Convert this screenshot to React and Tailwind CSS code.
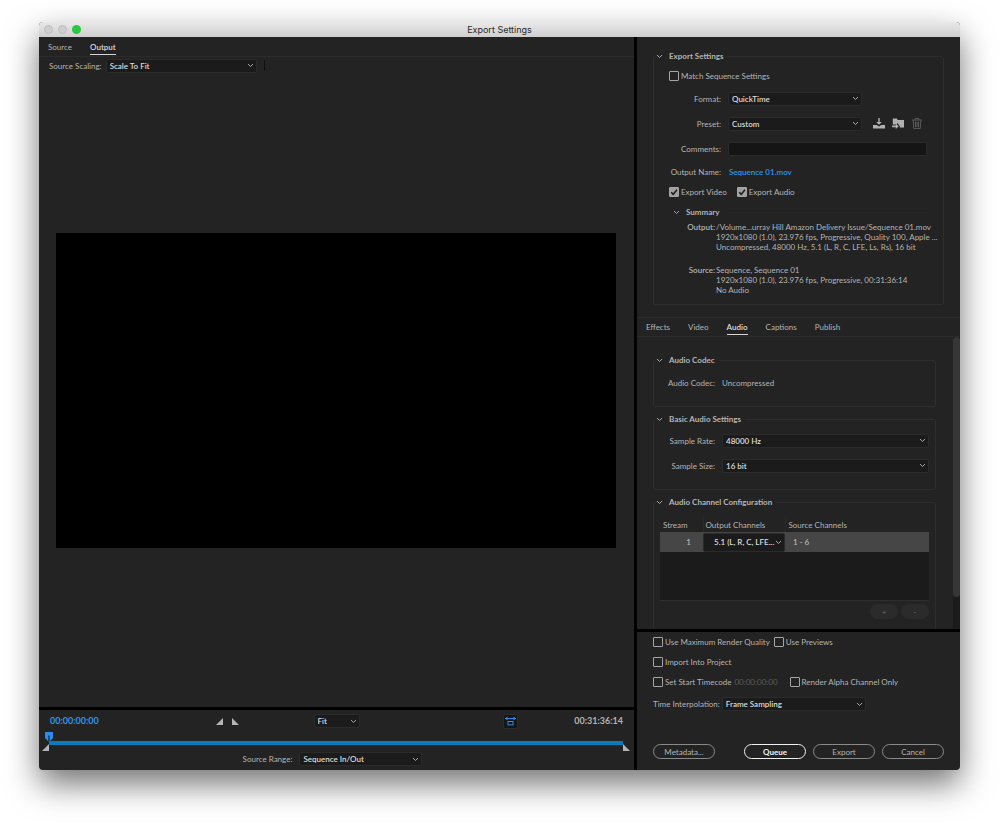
import { useState } from "react";
import clsx from "clsx";

const Chevron = ({ className }) => (
  <svg viewBox="0 0 8 6" className={clsx("pointer-events-none h-[5px] w-[7px]", className)} fill="none" stroke="currentColor" strokeWidth="1.1">
    <path d="M1 1.2 4 4.2 7 1.2" />
  </svg>
);

const Select = ({ id, label, options, className, selectClassName }) => (
  <span className={clsx("relative inline-flex h-[14px]", className)}>
    <select
      id={id}
      aria-label={label}
      className={clsx(
        "h-full w-full appearance-none rounded-[2px] border border-[#2b2b2b] bg-[#1b1b1b] font-semibold text-[#dcdcdc] outline-none",
        selectClassName || "truncate pr-3 pl-[3px]"
      )}
    >
      {options.map((option) => (
        <option key={option}>{option}</option>
      ))}
    </select>
    <Chevron className="absolute inset-y-0 right-[3px] my-auto text-[#b4b4b4]" />
  </span>
);

const Checkbox = ({ label, defaultChecked }) => (
  <label className="flex items-center gap-[2px]">
    <span className="relative flex">
      <input
        type="checkbox"
        defaultChecked={defaultChecked}
        className="peer h-[10px] w-[10px] appearance-none rounded-[1px] border border-[#a6a6a6] checked:bg-[#a0a0a0]"
      />
      <svg viewBox="0 0 10 10" className="pointer-events-none absolute inset-0 hidden h-[10px] w-[10px] peer-checked:block" fill="none" stroke="#1c1c1c" strokeWidth="1.5">
        <path d="M2.2 5.2 4.2 7.3 8 2.8" />
      </svg>
    </span>
    {label}
  </label>
);

const Group = ({ title, className, children }) => (
  <fieldset className={clsx("min-w-0 rounded-[2px] border border-[#2e2e2e]", className)}>
    <legend className="ml-px flex h-[14px] items-center pr-1 pl-px font-bold">
      <Chevron className="mr-[6px]" />
      {title}
    </legend>
    {children}
  </fieldset>
);

const Tab = ({ active, children, onClick }) => (
  <button
    type="button"
    role="tab"
    aria-selected={active}
    onClick={onClick}
    className={clsx("border-b pb-px leading-[12px]", active ? "border-[#d6d6d6] font-semibold text-[#dcdcdc]" : "border-transparent")}
  >
    {children}
  </button>
);

const FormRow = ({ label, htmlFor, wide, children }) => (
  <div className="flex h-[25px] items-center gap-[7px]">
    <label htmlFor={htmlFor} className={clsx("shrink-0 text-right", wide ? "w-[67px]" : "w-[61px]")}>
      {label}
    </label>
    {children}
  </div>
);

const PillButton = ({ primary, children }) => (
  <button
    type="button"
    className={clsx(
      "flex h-[15px] w-[62px] items-center justify-center rounded-full border",
      primary ? "border-[#f0f0f0] font-bold text-[#f0f0f0]" : "border-[#8a8a8a]"
    )}
  >
    {children}
  </button>
);

const TitleBar = () => (
  <header className="relative flex h-[15px] items-center justify-center bg-linear-to-b from-[#e9e9e9] to-[#cfcfcf] font-[Inter,sans-serif] text-[9px] text-[#2a2a2a]">
    <div className="absolute left-[5px] flex gap-[5px]">
      <span className="h-[9px] w-[9px] rounded-full border border-[#bdbdbd] bg-[#cfcfcf]" />
      <span className="h-[9px] w-[9px] rounded-full border border-[#bdbdbd] bg-[#cfcfcf]" />
      <span className="h-[9px] w-[9px] rounded-full bg-[#28c840]" />
    </div>
    <h1>Export Settings</h1>
  </header>
);

const Triangle = ({ flip }) => (
  <svg viewBox="0 0 7 7" className={clsx("h-[7px] w-[7px]", flip && "-scale-x-100")} fill="#b4b4b4">
    <path d="M7 0V7H0Z" />
  </svg>
);

const PreviewPane = () => {
  const [tab, setTab] = useState("Output");

  return (
    <main className="flex min-w-0 flex-1 flex-col">
      <div role="tablist" className="flex h-[20px] items-end gap-[18px] border-b border-[#2b2b2b] px-[9px] pb-px">
        {["Source", "Output"].map((name) => (
          <Tab key={name} active={tab === name} onClick={() => setTab(name)}>
            {name}
          </Tab>
        ))}
      </div>
      <div className="flex h-[17px] items-center pl-[10px]">
        <label htmlFor="scaling" className="mr-[4px]">Source Scaling:</label>
        <Select id="scaling" options={["Scale To Fit", "Scale To Fill", "Stretch To Fill"]} className="w-[151px]" />
        <span className="ml-[7px] h-[11px] w-px bg-[#101010]" />
      </div>
      <div className="flex flex-1 items-center pr-[18px] pl-[17px]">
        <div className="aspect-video w-full bg-black" />
      </div>

      {/* Transport */}
      <div className="border-t-[3px] border-black">
        <div className="grid h-[22px] grid-cols-[1fr_auto_1fr] items-center px-[11px] text-[9px] font-bold">
          <div className="flex items-center justify-between pr-[75px]">
            <span className="text-[#2d95ee]">00:00:00:00</span>
            <span className="flex gap-[9px]">
              <button type="button" aria-label="Set in point"><Triangle /></button>
              <button type="button" aria-label="Set out point"><Triangle flip /></button>
            </span>
          </div>
          <Select label="Zoom level" options={["Fit", "50%", "100%"]} className="w-[46px] text-[8px]" />
          <div className="flex items-center justify-between pl-[143px]">
            <button type="button" aria-label="Aspect ratio correction" className="flex h-[15px] w-[15px] items-center justify-center rounded-[2px] border border-[#2b2b2b] bg-[#161616]">
              <svg viewBox="0 0 11 10" className="h-[10px] w-[11px]" fill="none" stroke="#2d8ceb">
                <path d="M0 2.5H11" />
                <path d="M0 2.5 2.5 .6V4.4ZM11 2.5 8.5 .6V4.4Z" fill="#2d8ceb" stroke="none" />
                <rect x="3" y="5.5" width="5" height="3.4" />
              </svg>
            </button>
            <span>00:31:36:14</span>
          </div>
        </div>
        <div className="grid h-[20px] grid-cols-[10px_1fr_11px]">
          <div className="flex flex-col items-end">
            <svg viewBox="0 0 8 10" className="-mr-1 h-[10px] w-2 shrink-0">
              <path d="M0 0H8V6L4.6 9.6H3.4L0 6Z" fill="#2d8ceb" />
              <path d="M4 3.5V10" stroke="#0d2b48" strokeWidth="1.3" />
            </svg>
            <span className="mt-[2px]"><Triangle /></span>
          </div>
          <div className="mt-[9px] h-[4px] bg-[#0a7cbc]" />
          <div className="pt-3"><Triangle flip /></div>
        </div>
        <div className="flex h-[18px] items-start justify-center gap-[7px] pr-2">
          <label htmlFor="range" className="leading-[14px]">Source Range:</label>
          <Select id="range" options={["Sequence In/Out", "Entire Sequence", "Work Area", "Custom"]} className="w-[123px]" />
        </div>
      </div>
    </main>
  );
};

const Summary = () => (
  <section>
    <h3 className="flex h-[20px] items-center pl-[19px] font-bold">
      <Chevron className="mr-[6px]" />
      Summary
      <span className="mr-4 ml-[7px] h-px flex-1 bg-[#272727]" />
    </h3>
    <dl className="grid grid-cols-[61px_1fr] gap-x-px gap-y-[13px] leading-[10px] whitespace-nowrap">
      <dt className="text-right font-semibold">Output:</dt>
      <dd>
        /Volume...urray Hill Amazon Delivery Issue/Sequence 01.mov
        <br />
        1920x1080 (1.0), 23.976 fps, Progressive, Quality 100, Apple ...
        <br />
        Uncompressed, 48000 Hz, 5.1 (L, R, C, LFE, Ls, Rs), 16 bit
      </dd>
      <dt className="text-right font-semibold">Source:</dt>
      <dd>
        Sequence, Sequence 01
        <br />
        1920x1080 (1.0), 23.976 fps, Progressive, 00:31:36:14
        <br />
        No Audio
      </dd>
    </dl>
  </section>
);

const ExportPanel = () => (
  <section className="px-4 pt-3 pb-3">
    <Group title="Export Settings" className="pt-[2px] pb-[9px]">
      <div className="flex h-[21px] items-center pl-[15px]">
        <Checkbox label="Match Sequence Settings" />
      </div>
      <FormRow wide label="Format:" htmlFor="format">
        <Select id="format" options={["QuickTime", "H.264", "AVI"]} className="w-[134px]" />
      </FormRow>
      <FormRow wide label="Preset:" htmlFor="preset">
        <Select id="preset" options={["Custom"]} className="w-[134px]" />
        <span className="ml-[4px] flex items-center gap-[7px] text-[#b0b0b0]">
          <button type="button" aria-label="Save preset">
            <svg viewBox="0 0 12 11" className="h-[11px] w-3" fill="currentColor">
              <path d="M5.3 0H6.7V4H8.8L6 6.8 3.2 4H5.3Z" />
              <path d="M0 7H3.6L6 8.6 8.4 7H12V10.4H0Z" />
            </svg>
          </button>
          <button type="button" aria-label="Import preset">
            <svg viewBox="0 0 12 11" className="h-[11px] w-3" fill="currentColor">
              <path d="M.8.4H4.8L5.8 2H12V9.6H7.6L8 8.3 5 4.8V6.4H.8Z" />
              <path d="M0 7.5H3.8V5.8L6.8 8.3 3.8 10.9V9.2H0Z" />
            </svg>
          </button>
          <button type="button" aria-label="Delete preset" className="text-[#5a5a5a]">
            <svg viewBox="0 0 12 11" className="h-[11px] w-3" fill="none" stroke="currentColor">
              <path d="M1 2H11M4 1.8V.6H8V1.8M2.2 2.2 2.7 10.4H9.3L9.8 2.2M4.5 3.6V9M6 3.6V9M7.5 3.6V9" />
            </svg>
          </button>
        </span>
      </FormRow>
      <FormRow wide label="Comments:" htmlFor="comments">
        <input id="comments" type="text" className="mr-4 h-[14px] min-w-0 flex-1 rounded-[2px] border border-[#2b2b2b] bg-[#151515] px-1 outline-none" />
      </FormRow>
      <div className="flex h-[21px] items-center gap-[8px]">
        <span className="w-[67px] text-right">Output Name:</span>
        <a href="#output" className="font-semibold text-[#2d95ee]">Sequence 01.mov</a>
      </div>
      <div className="flex h-[20px] items-center gap-[10px] pl-[15px]">
        <Checkbox label="Export Video" defaultChecked />
        <Checkbox label="Export Audio" defaultChecked />
      </div>
      <Summary />
    </Group>
  </section>
);

const AudioPanel = () => (
  <div className="flex min-h-0 flex-1 overflow-hidden">
    <div className="flex h-0 min-w-0 flex-1 flex-col gap-[5px] pt-4 pr-[17px] pl-4">
      <Group title="Audio Codec" className="pt-[3px] pb-[11px]">
        <div className="flex h-[25px] items-center gap-[7px]">
          <span className="w-[61px] text-right">Audio Codec:</span>
          <span>Uncompressed</span>
        </div>
      </Group>
      <Group title="Basic Audio Settings" className="pt-[2px] pb-[11px]">
        <FormRow label="Sample Rate:" htmlFor="rate">
          <Select id="rate" options={["48000 Hz", "44100 Hz", "32000 Hz"]} className="mr-[6px] flex-1" />
        </FormRow>
        <FormRow label="Sample Size:" htmlFor="size">
          <Select id="size" options={["16 bit", "24 bit", "32 bit"]} className="mr-[6px] flex-1" />
        </FormRow>
      </Group>
      <Group title="Audio Channel Configuration" className="pt-2 pb-5">
        <div className="mx-[6px] h-[84px] border-b border-[#2e2e2e] bg-linear-to-b from-transparent from-[15px] to-[#1b1b1b] to-[15px]">
          <table className="w-full table-fixed border-collapse text-left">
            <thead>
              <tr className="h-[15px]">
                <th className="w-[43px] border-r border-[#292929] pl-[3px] font-normal">Stream</th>
                <th className="w-[82px] border-r border-[#292929] pl-[2px] font-normal">Output Channels</th>
                <th className="pl-[3px] font-normal">Source Channels</th>
              </tr>
            </thead>
            <tbody>
              <tr className="h-[20px] bg-[#464646] font-semibold">
                <td className="pr-[12px] text-right">1</td>
                <td className="p-0">
                  <Select label="Output channels" options={["5.1 (L, R, C, LFE...", "Stereo", "Mono"]} className="h-[19px] w-full align-top" selectClassName="pl-[10px]" />
                </td>
                <td className="pl-[8px]">1 - 6</td>
              </tr>
            </tbody>
          </table>
        </div>
        <div className="mx-[6px] mt-[3px] flex justify-end gap-[3px] text-[#6a6a6a]">
          <button type="button" aria-label="Add channel" className="h-[15px] w-7 rounded-full bg-[#2b2b2b]">+</button>
          <button type="button" aria-label="Remove channel" className="h-[15px] w-7 rounded-full bg-[#2b2b2b]">-</button>
        </div>
      </Group>
    </div>
    <div className="w-[7px] bg-[#1b1b1b]">
      <div className="h-[89%] rounded-full bg-[#363636]" />
    </div>
  </div>
);

const ExportFooter = () => (
  <footer className="border-t-[3px] border-black px-4 pb-[11px]">
    <div className="flex h-[20px] items-center gap-[4px]">
      <Checkbox label="Use Maximum Render Quality" />
      <Checkbox label="Use Previews" />
    </div>
    <div className="flex h-[20px] items-center">
      <Checkbox label="Import Into Project" />
    </div>
    <div className="flex h-[20px] items-center">
      <Checkbox label="Set Start Timecode" />
      <span className="mr-[12px] ml-[3px] text-[#5c5c5c]">00:00:00:00</span>
      <Checkbox label="Render Alpha Channel Only" />
    </div>
    <div className="flex h-[24px] items-center gap-[2px]">
      <label htmlFor="interpolation">Time Interpolation:</label>
      <Select id="interpolation" options={["Frame Sampling", "Frame Blending", "Optical Flow"]} className="w-[144px]" />
    </div>
    <div className="mt-[28px] flex gap-[7px]">
      <PillButton>Metadata...</PillButton>
      <span className="flex-1" />
      <PillButton primary>Queue</PillButton>
      <PillButton>Export</PillButton>
      <PillButton>Cancel</PillButton>
    </div>
  </footer>
);

const App = () => {
  const [tab, setTab] = useState("Audio");

  return (
    <div className="flex min-h-screen bg-white px-[39px] pt-[22px] pb-[56px] font-[Lato,sans-serif] text-[8px] leading-[12px] text-[#b4b4b4]">
      <div className="flex flex-1 flex-col overflow-hidden rounded-[4px] bg-[#232323] shadow-[0_14px_32px_rgba(0,0,0,0.55)]">
        <TitleBar />
        <div className="flex flex-1">
          <PreviewPane />
          <aside className="flex w-[326px] flex-col border-l-[3px] border-black">
            <ExportPanel />
            <div role="tablist" className="flex h-[20px] items-end gap-[18px] border-y border-[#2b2b2b] px-[9px] pb-px">
              {["Effects", "Video", "Audio", "Captions", "Publish"].map((name) => (
                <Tab key={name} active={tab === name} onClick={() => setTab(name)}>
                  {name}
                </Tab>
              ))}
            </div>
            <AudioPanel />
            <ExportFooter />
          </aside>
        </div>
      </div>
    </div>
  );
};

export default App;
